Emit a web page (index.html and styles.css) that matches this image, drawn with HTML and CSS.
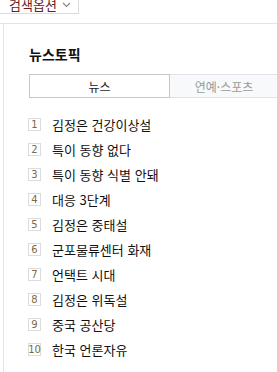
FILE: index.html
```html
<!DOCTYPE html>
<html lang="ko">

<head>
  <meta charset="UTF-8">
  <meta name="viewport" content="width=device-width, initial-scale=1.0">
  <title>뉴스토픽</title>
  <link rel="stylesheet" href="styles.css">
</head>

<body>
  <div class="top">
    <div class="search-option">
      <span class="option-label">검색옵션</span>
      <svg class="chevron" width="9" height="6" viewBox="0 0 9 6">
        <path d="M1 1 L4.5 4.5 L8 1" fill="none" stroke="#888" stroke-width="1.2" />
      </svg>
    </div>
  </div>
  <div class="frame">
    <div class="topic">
      <h2 class="title">뉴스토픽</h2>
      <div class="tabs">
        <div class="tab active">뉴스</div>
        <div class="tab">연예·스포츠</div>
      </div>
      <ol class="rank">
        <li><span class="num">1</span>김정은 건강이상설</li>
        <li><span class="num">2</span>특이 동향 없다</li>
        <li><span class="num">3</span>특이 동향 식별 안돼</li>
        <li><span class="num">4</span>대응 3단계</li>
        <li><span class="num">5</span>김정은 중태설</li>
        <li><span class="num">6</span>군포물류센터 화재</li>
        <li><span class="num">7</span>언택트 시대</li>
        <li><span class="num">8</span>김정은 위독설</li>
        <li><span class="num">9</span>중국 공산당</li>
        <li><span class="num">10</span>한국 언론자유</li>
      </ol>
    </div>
  </div>
</body>

</html>
```

FILE: styles.css
```css
body {
  margin: 0;
  font-family: "Noto Sans CJK KR", "Noto Sans", sans-serif;
  background: white;
  color: #111;
  font-size: 12px;
}

.top {
  height: 23px;
  border-bottom: 1px solid #e4e4e4;
  overflow: hidden;
}

.search-option {
  width: 79px;
  height: 14px;
  border-right: 1px solid #dcdcdc;
  border-bottom: 1px solid #dcdcdc;
  display: flex;
  align-items: flex-end;
  gap: 5px;
  padding-left: 9px;
  box-sizing: border-box;
  overflow: hidden;
}

.option-label {
  color: #6b1d1d;
  font-size: 13px;
  line-height: 13px;
  margin-bottom: 2px;
}

.chevron {
  margin-bottom: 5px;
}

.frame {
  margin-left: 3px;
  border-left: 1px solid #e4e4e4;
  min-height: 348px;
}

.topic {
  padding: 21px 0 0 25px;
}

.title {
  margin: 0;
  font-size: 14px;
  font-weight: bold;
  line-height: 18px;
}

.tabs {
  display: flex;
  margin-top: 11px;
  height: 24px;
}

.tab {
  flex: 0 0 108px;
  display: flex;
  align-items: center;
  justify-content: center;
  background: #f8f9fb;
  border-top: 1px solid #dfe2e6;
  border-bottom: 1px solid #dfe2e6;
  color: #999;
  font-size: 12px;
}

.tab.active {
  flex: 0 0 139px;
  background: white;
  border: 1px solid #c5c9ce;
  color: #222;
}

.rank {
  list-style: none;
  margin: 14px 0 0;
  padding: 0;
}

.rank li {
  display: flex;
  align-items: center;
  height: 25px;
  font-size: 13px;
}

.num {
  width: 11px;
  height: 11px;
  margin-left: -1px;
  border: 1px solid #dcdcdc;
  font-family: "DejaVu Sans", sans-serif;
  font-size: 10px;
  color: #7a6a4a;
  display: flex;
  align-items: center;
  justify-content: center;
  margin-right: 11px;
}
```
